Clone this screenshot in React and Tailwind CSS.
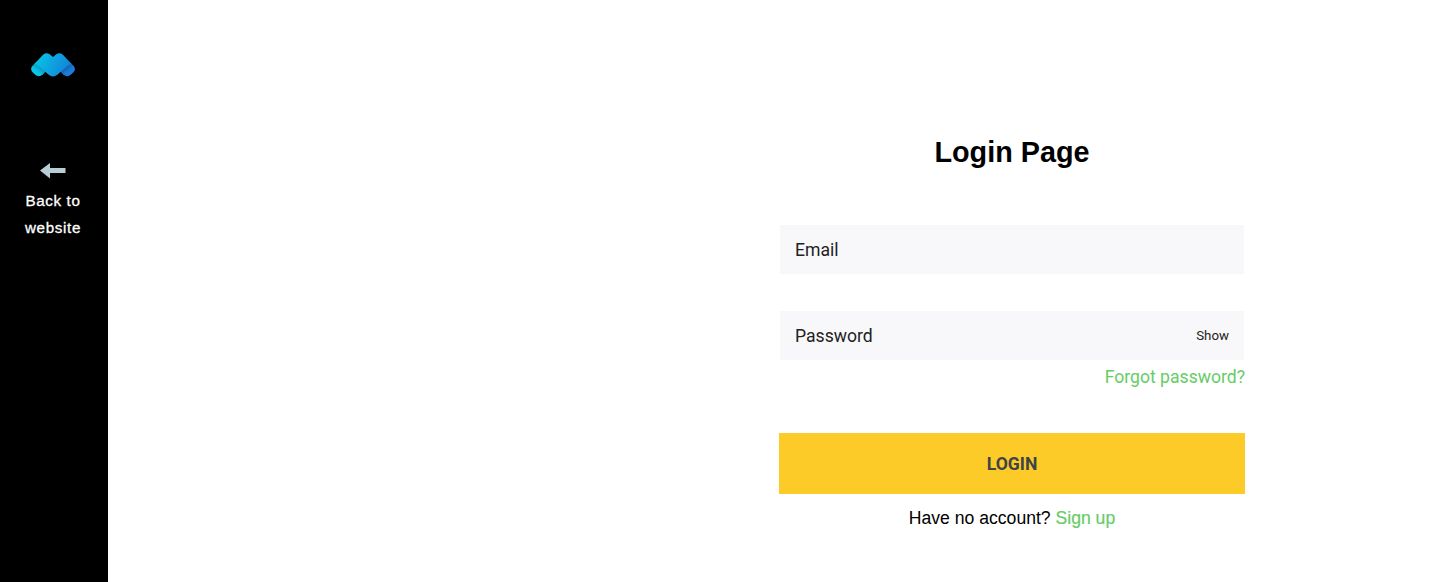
import { useState } from "react";

function Logo() {
  return (
    <svg width="44" height="24" viewBox="0 0 44 24" fill="none">
      <defs>
        <linearGradient id="body" x1="6" y1="6" x2="38" y2="20" gradientUnits="userSpaceOnUse">
          <stop stopColor="#08c0e6" />
          <stop offset="1" stopColor="#1480d8" />
        </linearGradient>
        <linearGradient id="left" x1="5" y1="18" x2="10" y2="12" gradientUnits="userSpaceOnUse">
          <stop stopColor="#08c6e6" />
          <stop offset="1" stopColor="#0a86b0" />
        </linearGradient>
        <linearGradient id="right" x1="39" y1="18" x2="34" y2="12" gradientUnits="userSpaceOnUse">
          <stop stopColor="#1a7dd9" />
          <stop offset="1" stopColor="#1258a0" />
        </linearGradient>
      </defs>
      <path d="M5 9.500L17 16L12 21.300Q8 24.800 4.200 21.800L1.300 19Q-1.200 15.800 1.500 12.800Z" fill="url(#left)" />
      <path d="M39 9.500L27 16L32 21.300Q36 24.800 39.800 21.800L42.700 19Q45.200 15.800 42.500 12.800Z" fill="url(#right)" />
      <path
        d="M5 9.300L12.300 1.500Q15.300-.9 18.700 1.300L22 4L25.300 1.300Q28.700-.9 31.700 1.500L39 9.300L42.500 12.800Q40.500 10.300 37.500 12L26.300 21.800Q22 25 17.700 21.800L6.500 12Q3.500 10.300 1.500 12.800Z"
        fill="url(#body)"
      />
    </svg>
  );
}

function Sidebar() {
  return (
    <aside className="flex w-27 shrink-0 flex-col items-center bg-black pt-[53px] pr-[2px] text-white">
      <Logo />
      <a href="#" className="mt-[86px] flex flex-col items-center">
        <svg width="26" height="16" viewBox="0 0 26 16" fill="#b9cdd5">
          <path d="M0 7.500L10 0V5H25.500V10H10V15.500Z" />
        </svg>
        <span className="mt-2 w-16 text-center text-[15.2px] leading-[27px] tracking-[0.65px] [-webkit-text-stroke:0.3px_white]">
          Back to website
        </span>
      </a>
    </aside>
  );
}

export default function App() {
  const [showPassword, setShowPassword] = useState(false);

  return (
    <div className="flex h-screen overflow-hidden bg-white font-['Liberation_Sans',sans-serif] text-black">
      <Sidebar />

      <main className="flex flex-1 justify-end pr-[188px]">
        <form className="flex w-[466px] flex-col pt-[131px]" onSubmit={(e) => e.preventDefault()}>
          <h1 className="text-center text-[28.8px] leading-[43px] font-bold">Login Page</h1>

          <input
            type="email"
            placeholder="Email"
            className="mx-px mt-[51px] h-[49px] bg-[#f8f8fb] px-[15px] pt-px font-['Roboto',sans-serif] text-[17.6px] outline-none placeholder:text-[#212121]"
          />

          <div className="mx-px mt-[37px] flex h-[49px] items-center bg-[#f8f8fb] px-[15px] font-['Roboto',sans-serif]">
            <input
              type={showPassword ? "text" : "password"}
              placeholder="Password"
              className="min-w-0 flex-1 pt-[2px] text-[17.6px] outline-none placeholder:text-[#212121]"
            />
            <button
              type="button"
              onClick={() => setShowPassword(!showPassword)}
              className="text-[13.3px] text-[#212121]"
            >
              Show
            </button>
          </div>

          <a href="#" className="mt-1 self-end font-['Roboto',sans-serif] text-[17.6px] leading-[27px] text-[#66cc66]">
            Forgot password?
          </a>

          <button
            type="submit"
            className="mt-[42px] h-[61px] bg-[#fdcb28] pt-[2px] font-['Roboto',sans-serif] text-[17.6px] font-bold text-[#3e4347]"
          >
            LOGIN
          </button>

          <p className="mt-[11px] text-center text-[17.6px] leading-[27px]">
            Have no account?{" "}
            <a href="#" className="text-[#66cc66] [-webkit-text-stroke:0.2px_#66cc66]">
              Sign up
            </a>
          </p>
        </form>
      </main>
    </div>
  );
}
